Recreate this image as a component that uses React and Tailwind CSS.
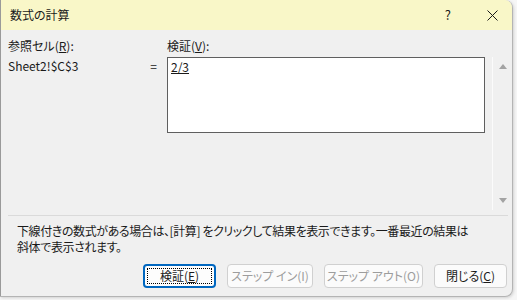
import React from 'react'

function Btn({ children, w, focused, disabled }) {
  return (
    <div
      className={`h-[24px] ${w} shrink-0 whitespace-nowrap rounded-[4px] flex items-center justify-center text-[12px] ${
        focused
          ? 'border-2 border-[#0067c0] bg-[#fdfdfd]'
          : 'border border-[#d0d0d0] bg-[#fbfbfb]'
      } ${disabled ? 'text-[#9d9d9d]' : 'text-[#1b1b1b]'}`}
    >
      {focused ? (
        <div className="w-[calc(100%-4px)] h-[calc(100%-4px)] border border-dotted border-black flex items-center justify-center">
          {children}
        </div>
      ) : (
        children
      )}
    </div>
  )
}

export default function App() {
  return (
    <div className="w-[517px] h-[300px] bg-[#f6f6f6] overflow-hidden font-['Noto_Sans_CJK_JP','Noto_Sans',sans-serif] [font-feature-settings:'palt']">
      <div className="w-[513px] h-[297px] flex flex-col bg-[#f0f0f0] border-l border-b border-r border-[#b4b4b4] border-l-[#9a9a9a] rounded-tr-[8px] rounded-br-[8px] overflow-hidden shadow-[1px_1px_3px_rgba(0,0,0,0.15)]">
        {/* title bar */}
        <div className="h-[30px] shrink-0 bg-[#f9f7c8] flex items-center pl-[9px] text-[12px] text-[#1a1a1a]">
          <span>数式の計算</span>
          <span className="ml-auto mr-[36px] text-[13px]">?</span>
          <svg width="11" height="11" viewBox="0 0 11 11" className="mr-[14px]">
            <path d="M0.5 0.5 L10.5 10.5 M10.5 0.5 L0.5 10.5" stroke="#1a1a1a" strokeWidth="1" />
          </svg>
        </div>

        {/* labels */}
        <div className="flex pl-[7px] pt-[8px] h-[27px] text-[12px] leading-[16px] text-[#1a1a1a]">
          <span className="w-[159px]">
            参照セル(<span className="underline">R</span>):
          </span>
          <span>
            検証(<span className="underline">V</span>):
          </span>
        </div>

        {/* content + scrollbar */}
        <div className="flex h-[153px]">
          <div className="flex flex-1 pl-[7px] text-[12px] leading-[16px] text-[#1a1a1a]">
            <div className="w-[159px] flex justify-between pt-[1px] pr-[10px]">
              <span>Sheet2!$C$3</span>
              <span>=</span>
            </div>
            <div className="w-[318px] h-[76px] bg-white border border-[#5f5f5f] px-[3px] pt-[1px]">
              <span className="underline">2/3</span>
            </div>
          </div>
          <div className="w-[20px] border-l border-[#fbfbfb] flex flex-col items-center justify-between py-[7px]">
            <svg width="8" height="5" viewBox="0 0 8 5">
              <path d="M0 5 L4 0 L8 5 Z" fill="#a3a3a3" />
            </svg>
            <svg width="8" height="5" viewBox="0 0 8 5">
              <path d="M0 0 L8 0 L4 5 Z" fill="#a3a3a3" />
            </svg>
          </div>
        </div>

        {/* separator */}
        <div className="ml-[7px] mr-[4px] mt-[5px] border-t border-[#dadada]" />

        {/* info */}
        <div className="pl-[16px] pt-[7px] text-[12px] leading-[16px] tracking-[-0.4px] text-[#1a1a1a] whitespace-nowrap">
          <div>下線付きの数式がある場合は、[計算] をクリックして結果を表示できます。一番最近の結果は</div>
          <div>斜体で表示されます。</div>
        </div>

        {/* buttons */}
        <div className="flex justify-end gap-[11px] pr-[5px] mt-[9px]">
          <Btn w="w-[73px]" focused>
            <span>
              検証(<span className="underline">E</span>)
            </span>
          </Btn>
          <Btn w="w-[86px]" disabled>
            ステップ イン(I)
          </Btn>
          <Btn w="w-[99px]" disabled>
            ステップ アウト(O)
          </Btn>
          <Btn w="w-[73px]">
            <span>
              閉じる(<span className="underline">C</span>)
            </span>
          </Btn>
        </div>
      </div>
    </div>
  )
}
